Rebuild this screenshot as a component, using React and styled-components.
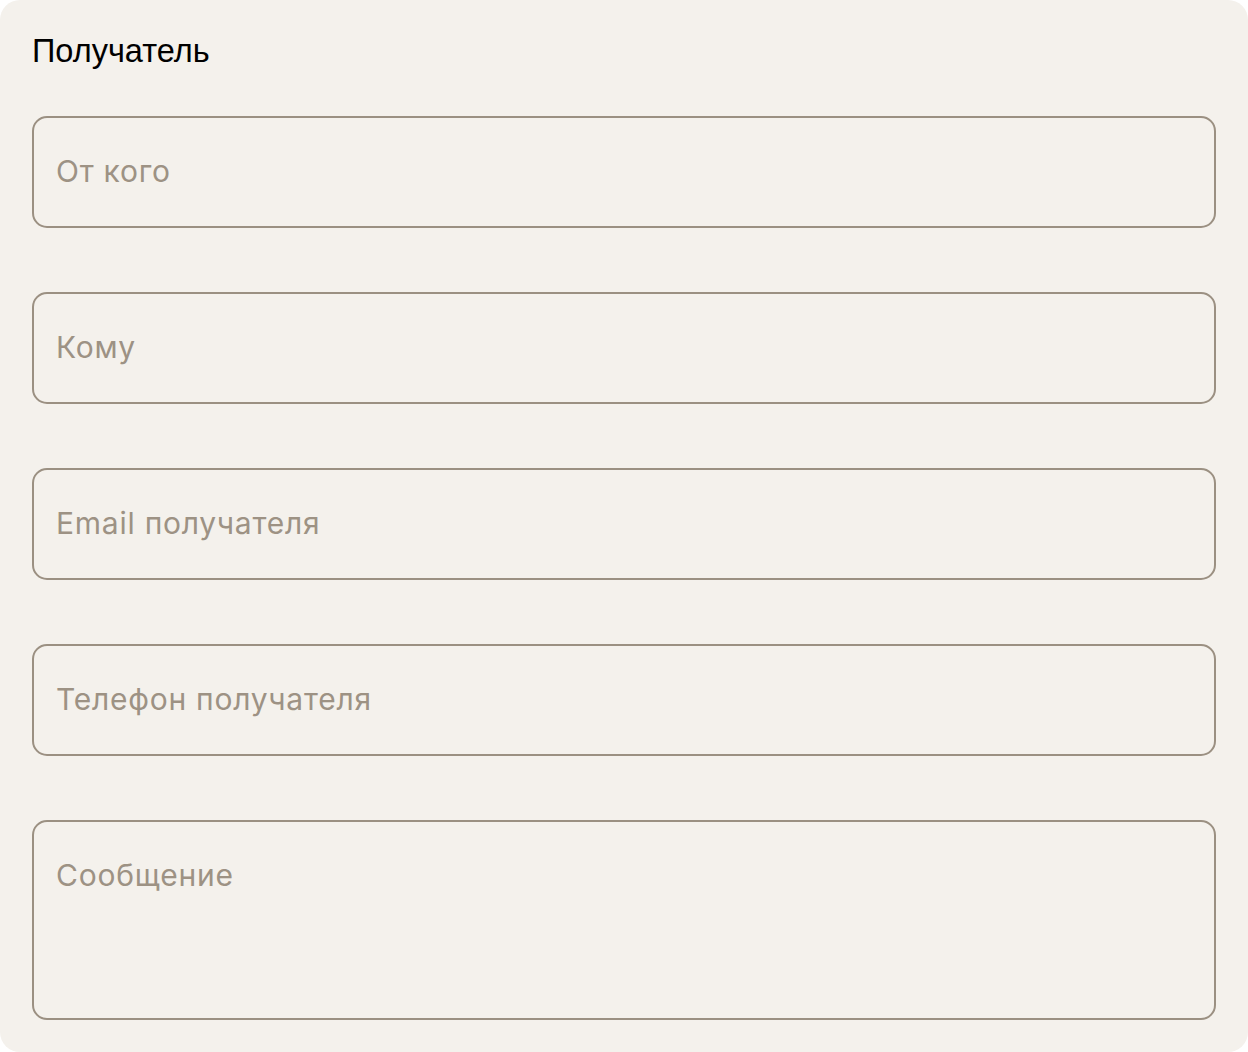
import React from "react";
import styled, { createGlobalStyle } from "styled-components";

const GlobalStyle = createGlobalStyle`
  * { box-sizing: border-box; }
  body {
    margin: 0;
    background: #ffffff;
    font-family: "Liberation Sans", Arial, sans-serif;
  }
`;

const Card = styled.section`
  width: 1248px;
  min-height: 1052px;
  background: #f4f1ec;
  border-radius: 20px;
  padding: 32px;
  display: flex;
  flex-direction: column;
`;

const Title = styled.h2`
  margin: 0 0 46px;
  font-family: "Liberation Sans", Arial, sans-serif;
  font-weight: 400;
  font-size: 32.5px;
  line-height: 38px;
  color: #000;
`;

const Fields = styled.div`
  display: flex;
  flex-direction: column;
  gap: 64px;
`;

const fieldBase = `
  width: 100%;
  border: 2px solid #9b9082;
  border-radius: 15px;
  background: transparent;
  padding: 35px 22px 37px;
  font-family: Inter, "Noto Sans", sans-serif;
  font-size: 30px;
  line-height: 36px;
  letter-spacing: 0.75px;
  color: #3a342d;
  outline: none;
  &::placeholder {
    color: #9d9284;
    opacity: 1;
  }
`;

const Input = styled.input`
  ${fieldBase}
  height: 112px;
`;

const Message = styled.textarea`
  ${fieldBase}
  height: 200px;
  resize: none;
  display: block;
`;

const fields = [
  { name: "from", placeholder: "От кого" },
  { name: "to", placeholder: "Кому" },
  { name: "email", placeholder: "Email получателя", type: "email" },
  { name: "phone", placeholder: "Телефон получателя", type: "tel" },
];

export default function App() {
  return (
    <>
      <GlobalStyle />
      <Card>
        <Title>Получатель</Title>
        <Fields>
          {fields.map((f) => (
            <Input key={f.name} name={f.name} type={f.type || "text"} placeholder={f.placeholder} />
          ))}
          <Message name="message" placeholder="Сообщение" />
        </Fields>
      </Card>
    </>
  );
}
